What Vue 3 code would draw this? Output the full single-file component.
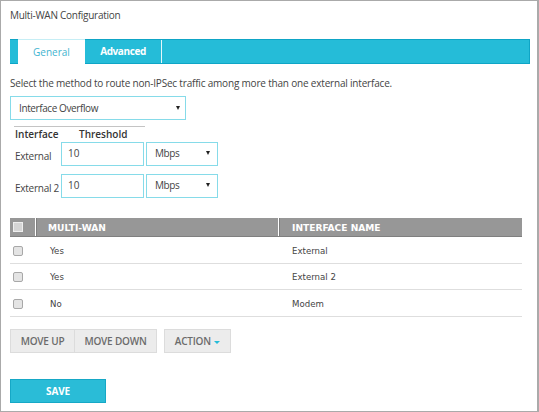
<script setup>
const rows = [
  { wan: 'Yes', name: 'External' },
  { wan: 'Yes', name: 'External 2' },
  { wan: 'No', name: 'Modem' },
]
const thresholds = ['External', 'External 2']
</script>

<template>
  <div class="page">
    <h1 class="title">Multi-WAN Configuration</h1>

    <div class="tabs">
      <div class="tab active">General</div>
      <div class="tab adv">Advanced</div>
    </div>

    <p class="desc">Select the method to route non-IPSec traffic among more than one external interface.</p>

    <div class="select main-select">
      <span>Interface Overflow</span><i class="arrow"></i>
    </div>

    <div class="thresh">
      <div class="thresh-head">
        <span class="th-a">Interface</span><span>Threshold</span>
      </div>
      <div v-for="t in thresholds" :key="t" class="thresh-row">
        <span class="thresh-label">{{ t }}</span>
        <div class="num">10</div>
        <div class="select unit"><span>Mbps</span><i class="arrow"></i></div>
      </div>
    </div>

    <div class="table">
      <div class="thead">
        <div class="c-check"><span class="head-box"></span></div>
        <div class="c-wan">MULTI-WAN</div>
        <div class="c-name">INTERFACE NAME</div>
      </div>
      <div v-for="r in rows" :key="r.name" class="trow">
        <div class="c-check"><span class="box"></span></div>
        <div class="c-wan">{{ r.wan }}</div>
        <div class="c-name">{{ r.name }}</div>
      </div>
    </div>

    <div class="actions">
      <button class="btn up">MOVE UP</button>
      <button class="btn down">MOVE DOWN</button>
      <button class="btn action">ACTION <i class="caret"></i></button>
    </div>

    <button class="save">SAVE</button>
  </div>
</template>

<style>
html, body { margin: 0; background: #fff; }
</style>

<style scoped>
.page {
  box-sizing: border-box;
  width: 539px;
  height: 412px;
  border: 1px solid #aaa;
  border-width: 1px 2px 1px 1px;
  padding: 0 0 0 9px;
  font-family: "Open Sans", sans-serif;
  font-size: 10px;
  color: #444;
  background: #fff;
  overflow: hidden;
}
.title {
  margin: 0;
  padding-top: 7px;
  height: 38px;
  box-sizing: border-box;
  font-size: 10px;
  letter-spacing: -0.26px;
  line-height: 14px;
  font-weight: 400;
  color: #444;
}
.tabs {
  box-sizing: border-box;
  width: 520px;
  height: 25px;
  background: #25bcd8;
  border-top: 1px solid #0ea5c6;
  border-bottom: 1px solid #0ea5c6;
  border-right: 1px solid #0ea5c6;
  padding-left: 8px;
  display: flex;
}
.tab {
  box-sizing: border-box;
  height: 24px;
  display: flex;
  align-items: center;
  justify-content: center;
  font-size: 10px;
}
.tab.active {
  width: 67px;
  background: #fff;
  color: #3fb4cf;
  border-top: 1px solid #c6eef5;
  margin-top: -1px;
  height: 25px;
}
.tab.adv {
  width: 77px;
  color: #fff;
  font-size: 10px;
  letter-spacing: -0.4px;
  font-weight: 700;
  border-right: 1px solid #e6f7fa;
  padding-bottom: 2px;
  height: 23px;
}
.desc {
  margin: 0;
  padding-top: 12px;
  height: 32px;
  box-sizing: border-box;
  line-height: 14px;
  font-size: 10px;
  letter-spacing: -0.19px;
  white-space: nowrap;
}
.select {
  box-sizing: border-box;
  border: 1px solid #86dbe9;
  display: flex;
  align-items: center;
  justify-content: space-between;
  background: #fff;
  color: #444;
}
.main-select {
  width: 176px;
  height: 24px;
  padding: 0 5px 0 8px;
  font-size: 10px;
  letter-spacing: -0.4px;
}
.arrow {
  width: 0;
  height: 0;
  border-left: 2.5px solid transparent;
  border-right: 2.5px solid transparent;
  border-top: 4px solid #222;
}
.thresh {
  margin-left: 4px;
}
.thresh-head {
  box-sizing: border-box;
  width: 131px;
  margin-top: 6px;
  height: 16px;
  border-top: 1px solid #c4c4c4;
  padding: 0 0 0 1px;
  display: flex;
  font-size: 10px;
  font-weight: 600;
  line-height: 14px;
  color: #333;
  white-space: nowrap;
}
.th-a { width: 64px; }
.thresh-row {
  display: flex;
  align-items: center;
  height: 24px;
  margin-bottom: 8px;
}
.thresh-label {
  box-sizing: border-box;
  width: 47px;
  padding: 4px 0 0 1px;
  font-size: 10px;
  letter-spacing: -0.25px;
  white-space: nowrap;
}
.num {
  box-sizing: border-box;
  width: 83px;
  height: 24px;
  margin-right: 2px;
  border: 1px solid #86dbe9;
  padding: 0 0 3px 6px;
  display: flex;
  align-items: center;
  font-size: 10px;
}
.unit {
  width: 72px;
  height: 24px;
  padding: 0 7px 3px 8px;
  font-size: 10px;
  letter-spacing: -0.4px;
}
.table {
  width: 512px;
  margin-top: 20px;
}
.thead {
  display: flex;
  height: 19px;
  background: #979797;
  border-bottom: 1px solid #7f7f7f;
  box-sizing: border-box;
  color: #fff;
  font-family: "DejaVu Sans", sans-serif;
  font-size: 9.1px;
  font-weight: 700;
  align-items: center;
}
.thead .c-check {
  align-self: stretch;
  border-right: 1px solid #fff;
}
.thead .c-wan {
  align-self: stretch;
  display: flex;
  align-items: center;
  border-left: 1px solid #7f7f7f;
  border-right: 1px solid #fff;
  padding: 1px 0 0 11px;
}
.thead .c-name {
  align-self: stretch;
  display: flex;
  align-items: center;
  border-left: 1px solid #7f7f7f;
  padding-top: 1px;
}
.c-check {
  box-sizing: border-box;
  width: 26px;
  flex: none;
  display: flex;
  align-items: center;
  padding-left: 3px;
}
.c-wan {
  box-sizing: border-box;
  width: 243px;
  flex: none;
  padding-left: 12px;
}
.c-name {
  flex: 1;
  padding-left: 12px;
}
.trow .c-wan { padding-left: 14px; }
.trow .c-name { padding-left: 13px; }
.trow {
  box-sizing: border-box;
  display: flex;
  align-items: center;
  height: 26.5px;
  padding-top: 2px;
  border-bottom: 1px solid #dedede;
  font-family: "DejaVu Sans", sans-serif;
  font-size: 8.6px;
}
.head-box {
  width: 8px;
  height: 8px;
  background: #d5d5d5;
  border: 1px solid #eee;
}
.box {
  box-sizing: border-box;
  width: 10px;
  height: 10px;
  border: 1px solid #a8a8a8;
  border-radius: 2px;
  background: #e4e4e4;
}
.actions {
  display: flex;
  margin-top: 12.5px;
}
.btn {
  box-sizing: border-box;
  height: 24px;
  border: 1px solid #dcdcdc;
  background: #ececec;
  color: #6b6b6b;
  font-family: "Open Sans", sans-serif;
  font-size: 10px;
  letter-spacing: -0.2px;
  font-weight: 600;
  padding: 0;
}
.up { width: 65px; }
.down { width: 83px; margin-left: -1px; }
.action { width: 67px; margin-left: 7px; }
.caret {
  display: inline-block;
  width: 0;
  height: 0;
  margin-left: 1px;
  vertical-align: middle;
  border-left: 3px solid transparent;
  border-right: 3px solid transparent;
  border-top: 3px solid #25bcd8;
}
.save {
  display: block;
  box-sizing: border-box;
  width: 96px;
  height: 24px;
  margin-top: 26px;
  background: #2abcd7;
  border: 1px solid #16a8c6;
  color: #fff;
  font-family: "Open Sans", sans-serif;
  font-size: 10px;
  letter-spacing: -0.15px;
  font-weight: 700;
  padding: 0;
}
</style>
